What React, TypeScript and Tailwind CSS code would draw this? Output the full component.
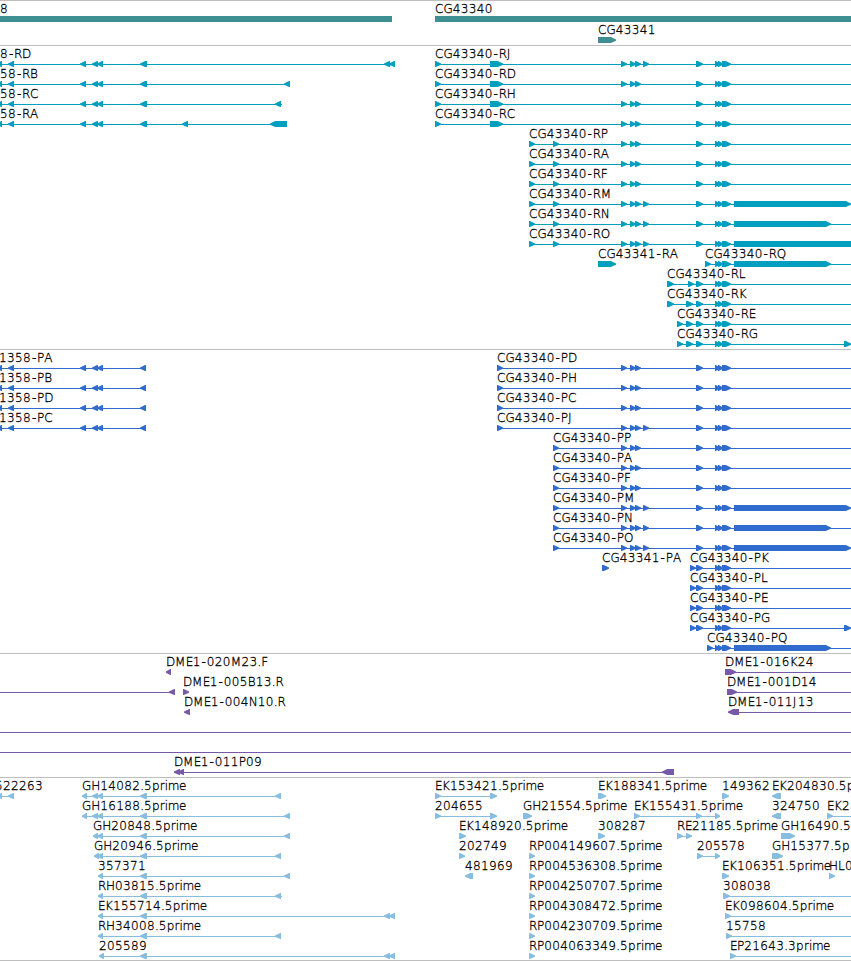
import clsx from "clsx";

type Mark = [start: number, end: number];

type Feature = {
  label?: string;
  at: number;
  line?: Mark;
  marks?: Mark[];
  dir?: "fwd" | "rev" | "none";
};

type TrackProps = {
  rows: Feature[][];
  color: string;
  rowHeight?: number;
  className?: string;
};

const WIDTH = 851;

const ADVANCES: Record<string, number> = {
  A: 8.5, B: 8, C: 8.5, D: 9, E: 7, F: 7, G: 9.2, H: 9, J: 5, K: 8, L: 7,
  M: 10.7, N: 9, O: 10, P: 7.3, Q: 10, R: 8,
  p: 7.8, r: 5, i: 3, m: 11.2, e: 7, ".": 3.8, "-": 6,
};

function glyphPositions(text: string, start: number) {
  let x = start;
  return text
    .split("")
    .map((char) => {
      const current = char === "-" ? x + 0.9 : x;
      x += ADVANCES[char] ?? 8;
      return current.toFixed(1);
    })
    .join(" ");
}

function markPoints([start, end]: Mark, dir: Feature["dir"]) {
  if (dir === "none") return `${start},14 ${end},14 ${end},20 ${start},20`;
  const head = Math.min(6, end - start) - 0.8;
  if (dir === "rev") {
    return `${end},14 ${start + head},14 ${start},16.5 ${start},17.7 ${start + head},20 ${end},20`;
  }
  return `${start},14 ${end - head},14 ${end},16.5 ${end},17.7 ${end - head},20 ${start},20`;
}

function Glyph({ label, at, line, marks = [], dir = "fwd" }: Feature) {
  return (
    <g>
      {line && <rect x={line[0]} y={17} width={line[1] - line[0]} height={1} shapeRendering="crispEdges" />}
      {marks.map((mark) => (
        <polygon key={mark[0]} points={markPoints(mark, dir)} />
      ))}
      {label && (
        <text x={glyphPositions(label, at)} y={11} className="fill-black stroke-black stroke-[0.3px]">
          {label}
        </text>
      )}
    </g>
  );
}

function Track({ rows, color, rowHeight = 20, className }: TrackProps) {
  return (
    <section className={clsx("flex flex-col border-t border-[#bebebe] pt-px", color, className)}>
      {rows.map((row, index) => (
        <svg
          key={index}
          width={WIDTH}
          height={rowHeight}
          className="block shrink-0 overflow-visible fill-current font-['DejaVu_Sans_Light','DejaVu_Sans',sans-serif] text-[12px]"
        >
          {row.map((feature) => (
            <Glyph key={`${feature.label}-${feature.at}`} {...feature} />
          ))}
        </svg>
      ))}
    </section>
  );
}

// Exons shared by several transcripts
const TAIL: Mark[] = [[715, 720], [718, 723], [722, 731]];
const MIDDLE: Mark[] = [[621, 627], [630, 636], [635, 641]];
const CORE: Mark[] = [...MIDDLE, [696, 703], ...TAIL];
const CORE_LONG: Mark[] = [...MIDDLE, [643, 649], [696, 703], ...TAIL];
const LEFT: Mark[] = [[-3, 2], [8, 14], [80, 86], [92, 98], [97, 103]];

const right = (label: string, at: number, marks: Mark[], end = WIDTH): Feature => ({
  label,
  at,
  marks,
  line: [at, end],
});

const left = (label: string, at: number, marks: Mark[], end: number): Feature => ({
  label,
  at,
  marks,
  line: [Math.max(at, 0), end],
  dir: "rev",
});

const single = (label: string, start: number, end: number, dir: Feature["dir"] = "fwd"): Feature => ({
  label,
  at: start,
  marks: [[start, end]],
  dir,
});

const genes: Feature[][] = [
  [
    { label: "8", at: 0, marks: [[0, 392]], dir: "none" },
    { label: "CG43340", at: 435, marks: [[435, 851]], dir: "none" },
  ],
  [single("CG43341", 598, 616)],
];

const transcripts: Feature[][] = [
  [
    left("8-RD", 0, [...LEFT, [140, 147], [384, 390], [389, 395]], 395),
    right("CG43340-RJ", 435, [[435, 441], [490, 503], ...CORE_LONG]),
  ],
  [
    left("58-RB", 0, [...LEFT, [140, 147], [284, 290]], 290),
    right("CG43340-RD", 435, [[435, 441], [490, 503], ...CORE]),
  ],
  [
    left("58-RC", 0, [...LEFT, [140, 147], [275, 281]], 282),
    right("CG43340-RH", 435, [[435, 441], [490, 503], ...CORE]),
  ],
  [
    left("58-RA", 0, [...LEFT, [140, 147], [182, 188], [270, 287]], 287),
    right("CG43340-RC", 435, [[435, 441], [490, 503], ...CORE]),
  ],
  [right("CG43340-RP", 529, [[529, 535], [553, 559], ...CORE])],
  [right("CG43340-RA", 529, [[529, 535], [553, 559], ...CORE])],
  [right("CG43340-RF", 529, [[529, 535], [553, 559], ...CORE])],
  [right("CG43340-RM", 529, [[529, 535], [553, 559], ...CORE_LONG, [734, 851]])],
  [right("CG43340-RN", 529, [[529, 535], [553, 559], ...CORE_LONG, [734, 831]])],
  [right("CG43340-RO", 529, [[529, 535], [553, 559], ...CORE_LONG, [734, 860]])],
  [
    single("CG43341-RA", 598, 616),
    right("CG43340-RQ", 705, [[705, 711], ...TAIL, [734, 831]]),
  ],
  [right("CG43340-RL", 667, [[667, 674], [688, 694], [696, 703], ...TAIL])],
  [right("CG43340-RK", 667, [[667, 674], [686, 693], [696, 703], ...TAIL])],
  [right("CG43340-RE", 677, [[677, 683], [686, 693], [696, 703], ...TAIL])],
  [right("CG43340-RG", 677, [[677, 683], [686, 693], [696, 703], ...TAIL, [844, 851]])],
];

const proteins: Feature[][] = [
  [
    left("1358-PA", -1, [...LEFT, [140, 146]], 146),
    right("CG43340-PD", 497, [[497, 503], ...CORE]),
  ],
  [
    left("1358-PB", -1, [...LEFT, [140, 146]], 146),
    right("CG43340-PH", 497, [[497, 503], ...CORE]),
  ],
  [
    left("1358-PD", -1, [...LEFT, [140, 146]], 146),
    right("CG43340-PC", 497, [[497, 503], ...CORE]),
  ],
  [
    left("1358-PC", -1, [...LEFT, [140, 146]], 146),
    right("CG43340-PJ", 497, [[497, 503], ...CORE_LONG]),
  ],
  [right("CG43340-PP", 553, [[553, 559], ...CORE])],
  [right("CG43340-PA", 553, [[553, 559], ...CORE])],
  [right("CG43340-PF", 553, [[553, 559], ...CORE])],
  [right("CG43340-PM", 553, [[553, 559], ...CORE_LONG, [734, 851]])],
  [right("CG43340-PN", 553, [[553, 559], ...CORE_LONG, [734, 831]])],
  [right("CG43340-PO", 553, [[553, 559], ...CORE_LONG, [734, 851]])],
  [
    single("CG43341-PA", 602, 609),
    right("CG43340-PK", 690, [[690, 696], [696, 703], ...TAIL]),
  ],
  [right("CG43340-PL", 690, [[690, 696], [696, 703], ...TAIL])],
  [right("CG43340-PE", 690, [[690, 696], [696, 703], ...TAIL])],
  [right("CG43340-PG", 690, [[690, 696], [696, 703], ...TAIL, [844, 851]])],
  [right("CG43340-PQ", 707, [[707, 713], ...TAIL, [734, 831]])],
];

const bacs: Feature[][] = [
  [single("DME1-020M23.F", 166, 171, "rev"), right("DME1-016K24", 725, [[725, 736]])],
  [
    { at: 0, line: [0, 175], marks: [[169, 175]], dir: "rev" },
    single("DME1-005B13.R", 183, 189),
    right("DME1-001D14", 727, [[727, 737]]),
  ],
  [
    single("DME1-004N10.R", 184, 190, "rev"),
    left("DME1-011J13", 728, [[728, 739]], WIDTH),
  ],
  [{ at: 0, line: [0, WIDTH] }],
  [{ at: 0, line: [0, WIDTH] }],
  [left("DME1-011P09", 174, [[174, 180], [178, 184], [662, 674]], 674)],
];

const ests: Feature[][] = [
  [
    left("522263", -5, [[-3, 2], [8, 14]], 14),
    left("GH14082.5prime", 82, [[82, 87], [92, 98], [97, 103], [140, 147], [275, 281]], 281),
    right("EK153421.5prime", 435, [[435, 441], [490, 497]], 497),
    single("EK188341.5prime", 598, 606),
    single("149362", 722, 729),
    single("EK204830.5p", 772, 781, "rev"),
  ],
  [
    left("GH16188.5prime", 82, [[82, 87], [92, 98], [97, 103], [140, 147], [284, 290]], 290),
    right("204655", 435, [[435, 441], [490, 497]], 497),
    single("GH21554.5prime", 523, 532),
    right("EK155431.5prime", 634, [[634, 640], [696, 702], [715, 720]], 720),
    single("324750", 772, 781, "rev"),
    right("EK2", 827, [[827, 833]]),
  ],
  [
    left("GH20848.5prime", 93, [[93, 98], [97, 103], [140, 147], [284, 290]], 290),
    single("EK148920.5prime", 459, 466),
    single("308287", 598, 605),
    right("RE21185.5prime", 677, [[677, 683], [686, 692]], 692),
    single("GH16490.5", 781, 795),
  ],
  [
    left("GH20946.5prime", 94, [[94, 99], [97, 103], [140, 147], [275, 281]], 281),
    single("202749", 459, 465),
    single("RP004149607.5prime", 529, 535),
    right("205578", 697, [[697, 703], [715, 720]], 720),
    single("GH15377.5p", 772, 783),
  ],
  [
    left("357371", 98, [[98, 103], [140, 147], [284, 290]], 290),
    single("481969", 465, 473, "rev"),
    single("RP004536308.5prime", 529, 535),
    single("EK106351.5prime", 722, 729),
    single("HL0", 829, 835),
  ],
  [
    left("RH03815.5prime", 98, [[98, 103], [140, 147], [275, 281]], 282),
    single("RP004250707.5prime", 529, 535),
    right("308038", 723, [[723, 730]]),
  ],
  [
    left("EK155714.5prime", 98, [[98, 103], [140, 147], [384, 390], [389, 395]], 395),
    single("RP004308472.5prime", 529, 535),
    right("EK098604.5prime", 725, [[725, 731]]),
  ],
  [
    left("RH34008.5prime", 98, [[98, 103], [140, 147], [275, 281]], 281),
    single("RP004230709.5prime", 529, 535),
    right("15758", 726, [[726, 732]]),
  ],
  [
    left("205589", 99, [[99, 104], [140, 147], [384, 390], [389, 395]], 395),
    single("RP004063349.5prime", 529, 535),
    right("EP21643.3prime", 730, [[730, 736]]),
  ],
];

export default function App() {
  return (
    <main className="flex h-[961px] w-[851px] flex-col overflow-hidden bg-white">
      <Track rows={genes} color="text-[#3d8f94]" rowHeight={21} className="pb-px" />
      <Track rows={transcripts} color="text-[#009ebf]" className="pb-0.5" />
      <Track rows={proteins} color="text-[#306cce]" className="pb-0.5" />
      <Track rows={bacs} color="text-[#775aa7]" className="pb-0.5" />
      <Track rows={ests} color="text-[#87bddf]" className="border-b pb-px" />
    </main>
  );
}
